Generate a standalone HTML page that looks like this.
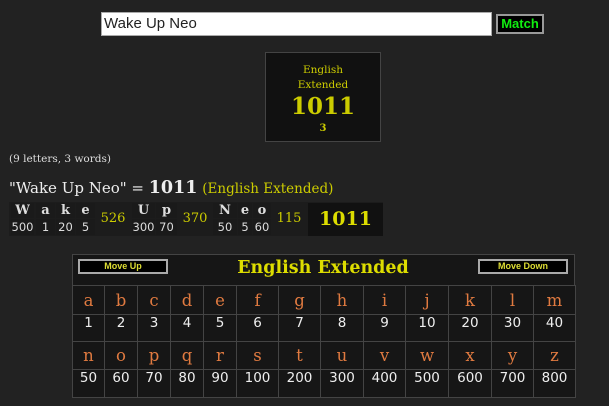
<!DOCTYPE html>
<html><head><meta charset="utf-8"><style>
*{margin:0;padding:0;box-sizing:border-box}
body{width:609px;height:406px;background:#222;position:relative;overflow:hidden;font-family:"DejaVu Serif",serif}
.a{position:absolute}
.inp{left:101px;top:12px;width:391px;height:24px;background:#fff;border:1px solid #aaa;font:15px "Liberation Sans",sans-serif;color:#222;padding:2px 2px;line-height:18px}
.btn{left:496px;top:14px;width:48px;height:20px;background:#000;border:2px solid #999;color:#1e1;font:bold 13px "Liberation Sans",sans-serif;text-align:center;line-height:16px}
.box{left:265px;top:52px;width:116px;height:90px;background:#111;border:1px solid #444;color:#cc0;text-align:center}
.c{position:absolute;text-align:center;background:#1a1a1a;color:#ddd}
.bt{position:absolute;background:#000;border:2px solid #aaa;color:#dd3;font:bold 9px "Liberation Sans",sans-serif;text-align:center;line-height:11px;height:15px;width:90px}
.g{position:absolute;border:1px solid #444;background:#161616;text-align:center}
.n{font:13px "DejaVu Sans",sans-serif}
</style></head><body>
<div class="a inp">Wake Up Neo</div>
<div class="a btn">Match</div>
<div class="a box">
 <div class="a" style="left:0;width:114px;top:10px;font-size:10.5px;line-height:15px">English<br>Extended</div>
 <div class="a" style="left:0;width:114px;top:40px;font-size:23px;font-weight:bold;line-height:28px">1011</div>
 <div class="a" style="left:0;width:114px;top:70px;font-size:10px;font-weight:bold">3</div>
</div>
<div class="a" style="left:9px;top:153px;font-size:10.5px;color:#ddd">(9 letters, 3 words)</div>
<div class="a" style="left:9px;top:178px;font-size:15px;color:#eee;white-space:nowrap">"Wake Up Neo" = <b style="font-size:17.5px">1011</b> <span style="color:#cc0;font-size:13.5px">(English Extended)</span></div>
<div class="a" style="left:9px;top:202px;width:374px;height:34px;background:#1c1c1c"></div>
<div class="c" style="left:11px;top:203px;width:23px;height:15px;font-size:13px;font-weight:bold;line-height:15px">W</div>
<div class="c n" style="left:11px;top:219px;width:23px;height:16px;font-size:11.5px;line-height:16px">500</div>
<div class="c" style="left:36px;top:203px;width:19px;height:15px;font-size:13px;font-weight:bold;line-height:15px">a</div>
<div class="c n" style="left:36px;top:219px;width:19px;height:16px;font-size:11.5px;line-height:16px">1</div>
<div class="c" style="left:56px;top:203px;width:19px;height:15px;font-size:13px;font-weight:bold;line-height:15px">k</div>
<div class="c n" style="left:56px;top:219px;width:19px;height:16px;font-size:11.5px;line-height:16px">20</div>
<div class="c" style="left:76px;top:203px;width:19px;height:15px;font-size:13px;font-weight:bold;line-height:15px">e</div>
<div class="c n" style="left:76px;top:219px;width:19px;height:16px;font-size:11.5px;line-height:16px">5</div>
<div class="c" style="left:96px;top:203px;width:34px;height:32px;color:#cc0;font-size:13px;line-height:32px;background:none">526</div>
<div class="c" style="left:132px;top:203px;width:23px;height:15px;font-size:13px;font-weight:bold;line-height:15px">U</div>
<div class="c n" style="left:132px;top:219px;width:23px;height:16px;font-size:11.5px;line-height:16px">300</div>
<div class="c" style="left:156px;top:203px;width:21px;height:15px;font-size:13px;font-weight:bold;line-height:15px">p</div>
<div class="c n" style="left:156px;top:219px;width:21px;height:16px;font-size:11.5px;line-height:16px">70</div>
<div class="c" style="left:178px;top:203px;width:34px;height:32px;color:#cc0;font-size:13px;line-height:32px;background:none">370</div>
<div class="c" style="left:213px;top:203px;width:24px;height:15px;font-size:13px;font-weight:bold;line-height:15px">N</div>
<div class="c n" style="left:213px;top:219px;width:24px;height:16px;font-size:11.5px;line-height:16px">50</div>
<div class="c" style="left:238px;top:203px;width:14px;height:15px;font-size:13px;font-weight:bold;line-height:15px">e</div>
<div class="c n" style="left:238px;top:219px;width:14px;height:16px;font-size:11.5px;line-height:16px">5</div>
<div class="c" style="left:253px;top:203px;width:18px;height:15px;font-size:13px;font-weight:bold;line-height:15px">o</div>
<div class="c n" style="left:253px;top:219px;width:18px;height:16px;font-size:11.5px;line-height:16px">60</div>
<div class="c" style="left:272px;top:203px;width:34px;height:32px;color:#cc0;font-size:13px;line-height:32px;background:none">115</div>
<div class="c" style="left:308px;top:203px;width:75px;height:33px;color:#dd0;font-size:19px;font-weight:bold;line-height:33px;background:#111">1011</div>
<div class="a" style="left:72px;top:254px;width:503px;height:143px;background:#161616;border:1px solid #444"></div>
<div class="bt" style="left:78px;top:259px">Move Up</div>
<div class="bt" style="left:478px;top:259px">Move Down</div>
<div class="a" style="left:180px;top:258px;width:286px;text-align:center;color:#dd0;font-size:17.5px;font-weight:bold">English Extended</div>
<div id="grid"></div>
<script>
var xs=[72,104,137,170,203,236,278,320,363,405,448,491,533,575];
var ys=[285,314,341,369,397];
var L="abcdefghijklmnopqrstuvwxyz",V=[1,2,3,4,5,6,7,8,9,10,20,30,40,50,60,70,80,90,100,200,300,400,500,600,700,800];
var h="";
for(var r=0;r<4;r++)for(var c=0;c<13;c++){
 var half=r>>1, i=half*13+c, isL=(r%2==0);
 var t=isL?L[i]:V[i], ht=ys[r+1]-ys[r];
 h+='<div class="g" style="left:'+xs[c]+'px;top:'+ys[r]+'px;width:'+(xs[c+1]-xs[c]+1)+'px;height:'+(ht+1)+'px;line-height:'+ht+'px;'+(isL?'color:#e07a40;font-size:16.5px':'color:#eee;font:13.5px DejaVu Sans,sans-serif')+'">'+t+'</div>';
}
document.getElementById("grid").innerHTML=h;
</script>
</body></html>
